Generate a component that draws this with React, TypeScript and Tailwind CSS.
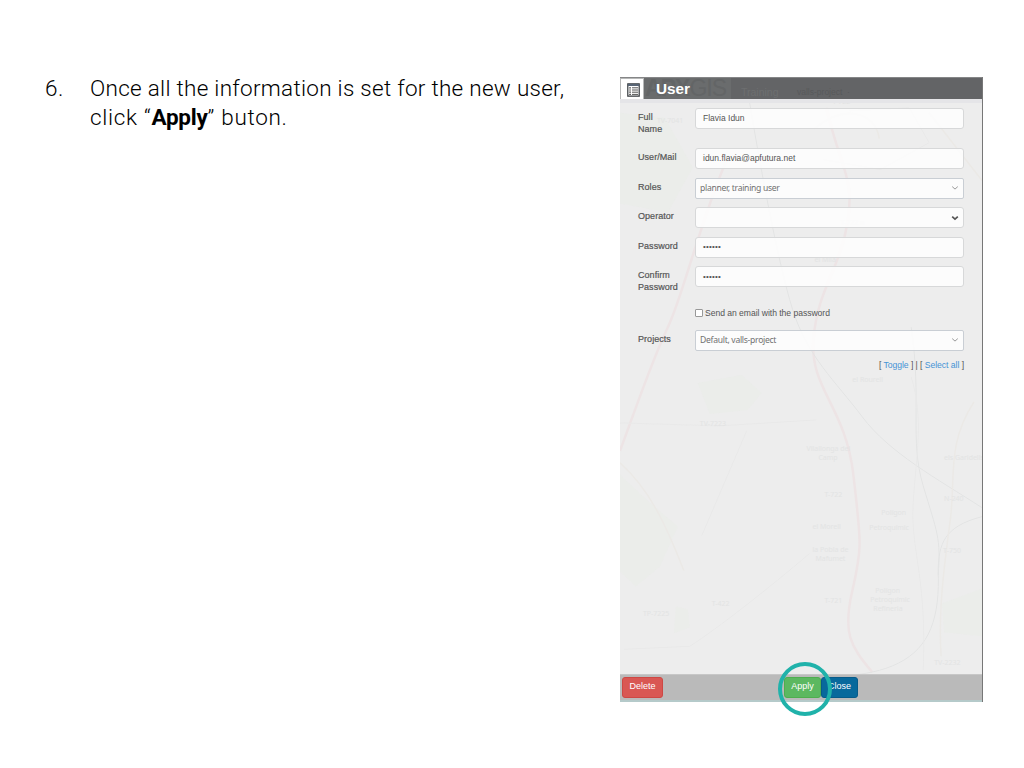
import React from 'react';

const liberation = "font-['Liberation_Sans',Arial,sans-serif]";

function Chevron({ bold }: { bold?: boolean }) {
  return (
    <svg className="ml-auto h-[6px] w-[8px] shrink-0" viewBox="0 0 8 6" fill="none">
      <path
        d="M1.2 1.6 4 4.1 6.8 1.6"
        stroke={bold ? '#555' : '#999'}
        strokeWidth={bold ? 1.7 : 1}
      />
    </svg>
  );
}

function Row({ label, height, children }: { label: React.ReactNode; height: string; children: React.ReactNode }) {
  return (
    <div className={`flex items-start ${height}`}>
      <div className="w-[57px] shrink-0 pt-[3px] text-[9px] leading-[12px] tracking-[0.05px] text-[#555] [-webkit-text-stroke:0.2px_#555]">
        {label}
      </div>
      {children}
    </div>
  );
}

const field = 'flex h-[21px] w-[269px] items-center rounded-[3px] border border-[#d7d8d9] bg-[#fdfdfd]/90 pr-[4px]';
const input = `${field} pl-[7px] text-[8.5px] text-[#555]`;
const select = "flex h-[21px] w-[269px] items-center rounded-[2px] border border-[#c9ced4] bg-[#fdfdfd]/90 pr-[4px] pl-[4px] font-['Noto_Sans','Open_Sans',sans-serif] text-[8.6px] tracking-[-0.3px] text-[#707070]";

function MapBackdrop() {
  const labels: [number, number, string][] = [
    [232, 13, 'el Rourell'], [233, 305, 'el Rourell'], [80, 349, 'TV-7223'],
    [187, 374, 'Vilallonga del'], [199, 383, 'Camp'], [205, 420, 'T-722'],
    [193, 452, 'el Morell'], [193, 475, 'la Pobla de'], [196, 484, 'Mafumet'],
    [205, 527, 'T-721'], [92, 530, 'T-422'], [23, 540, 'TP-7225'],
    [262, 438, 'Polígon'], [250, 453, 'Petroquímic'], [256, 517, 'Polígon'],
    [251, 526, 'Petroquímic'], [254, 535, 'Refineria'], [325, 424, 'N-240'],
    [324, 476, 'T-750'], [325, 383, 'els Garidells'], [315, 589, 'TV-2232'],
    [213, 26, 'T-722'], [221, 148, 'T-722 n'], [195, 185, 'el Milà'], [37, 45, 'TV-7041'],
  ];
  return (
    <svg className="absolute inset-0 h-full w-full" viewBox="0 0 363 625" fill="none">
      <g fill="#e9ece8" opacity=".6">
        <path d="M78 306l44-8 20 18-14 17-38 4zM0 398l30 28 28 24-18 40-24 20-16-15zM323 527l40-15v48l-38-4zM56 530l12 3 2 18-16 6zM0 35l45 5 28 50-25 45-48-9z" />
      </g>
      <g stroke="#ede4e5" strokeWidth="2.5">
        <path d="M207 30c14 62 29 69 21 116s-30 66-34 116 32 67 40 136 9 73-1 116-2 56 20 82" />
        <path d="M0 374C20 320 33 281 48 250s32-105 59-168" />
      </g>
      <g stroke="#e3e4e4" strokeWidth="1">
        <path d="M130 25c10 60 28 159 43 207s43 72 70 108 75 62 120 91M363 440c-39 10-43 28-44 53 2 48-8 78-40 94s-74 12-104 17" />
        <path d="M292 250c11 75-2 112 12 159s18 52 15 90" />
      </g>
      <g stroke="#e9e9e9" strokeWidth="1">
        <path d="M0 346l99 3 98-6M82 459l45-105M190 477c-41 35-92 75-120 93L4 573" />
        <path d="M292 300c13 42 5 78 2 126s14 73 10 168M230 33l60-3 20 35-49 27-57-10" />
      </g>
      <g stroke="#ebe9e6" strokeWidth="1.5">
        <path d="M0 386c30 27 46 62 64 108M355 325c-28 43-18 76-24 120s-12 91-9 135M195 51c30-25 61-17 65 10M310 35l53 68" />
      </g>
      <g fill="#e1e2e2" fontFamily="Noto Sans, sans-serif" fontSize="7" opacity=".8">
        {labels.map(([x, y, t], i) => <text key={i} x={x} y={y}>{t}</text>)}
      </g>
    </svg>
  );
}

function UserPanel() {
  return (
    <section className={`relative flex h-[625px] w-[363px] flex-col overflow-hidden border-r border-r-[#777] bg-[#ededed] ${liberation}`}>
      <MapBackdrop />
      <header className="relative flex h-[22px] shrink-0 border-t border-[#858687] bg-[#636466]">
        <div className="absolute top-0 left-0 flex h-full w-[111px] items-center justify-end overflow-hidden bg-[#6a6c6d] pr-[5px] text-[23px] font-bold tracking-[-1px] text-[#636566]">
          APX<span className="font-normal">GIS</span>
        </div>
        <span className="absolute top-[7px] left-[121px] text-[10.5px] leading-[15px] text-[#6d6f70]">Training</span>
        <span className="absolute top-[7px] left-[177px] text-[8.5px] leading-[15px] text-[#57595b]">valls-project&nbsp; ·</span>
        <div className="relative flex h-[23px] w-[24px] shrink-0 items-center justify-center border border-[#b7b8b8] bg-white pl-[2px]">
          <svg className="h-[14px] w-[13px]" viewBox="0 0 13 14">
            <path fill="#fff" stroke="#34383c" strokeWidth="1.2" d="M.8.8h11.4v12.4H.8z" />
            <path fill="#586575" d="M1 1h11v2H1z" />
            <path fill="#333" d="M2.3 4.2h1.5v1.2H2.3zM2.3 6.4h1.5v1.2H2.3zM2.3 8.6h1.5v1.2H2.3zM2.3 10.8h1.5v1.2H2.3z" />
            <path stroke="#555" d="M5 4.8h6M5 7h6M5 9.2h6M5 11.4h6" />
          </svg>
        </div>
        <h1 className="relative ml-[12px] text-[15.3px] leading-[21px] font-bold text-white">User</h1>
      </header>
      <div className="relative h-[4px] shrink-0 bg-[#e5e5e8]" />
      <form className="relative flex flex-1 flex-col pt-[4.5px] pl-[18px]" onSubmit={(e) => e.preventDefault()}>
        <Row height="h-[40px]" label={<>Full<br />Name</>}><div className={input}>Flavia Idun</div></Row>
        <Row height="h-[30px]" label="User/Mail"><div className={input}>idun.flavia@apfutura.net</div></Row>
        <Row height="h-[29.5px]" label="Roles"><div className={select}>planner, training user<Chevron /></div></Row>
        <Row height="h-[29.5px]" label="Operator"><div className={input}><Chevron bold /></div></Row>
        <Row height="h-[29.5px]" label="Password"><div className={`${input} text-[8px] tracking-[0.2px]`}>••••••</div></Row>
        <Row height="h-[37px]" label={<>Confirm<br />Password</>}><div className={`${input} text-[8px] tracking-[0.2px]`}>••••••</div></Row>
        <label className="ml-[57px] flex h-[26.5px] items-start pt-[4px] text-[8.6px] leading-[12px] tracking-[-0.04px] text-[#555]">
          <span className="mt-[2px] mr-[2px] h-[8px] w-[8px] rounded-[1px] border border-[#999] bg-white" />
          Send an email with the password
        </label>
        <Row height="h-[29px]" label="Projects"><div className={select}>Default, valls-project<Chevron /></div></Row>
        <div className="mr-[18px] text-right text-[8.6px] leading-[12px] tracking-[-0.04px] text-[#555]">
          [ <a className="text-[#4593d5]">Toggle</a> ] | [ <a className="text-[#4593d5]">Select all</a> ]
        </div>
      </form>
      <footer className="relative flex h-[28px] shrink-0 items-start border-t border-b-2 border-t-[#c7c7c7] border-b-[#b5caca] bg-[#bababa] pt-[2px] pl-[2px] text-[9px] leading-[17px] text-white">
        <button className="flex h-[21px] w-[41px] justify-center rounded-[3px] border border-[#ce4844] bg-[#d95753]">Delete</button>
        <button className="ml-[121px] flex h-[21px] w-[37px] justify-center rounded-[3px] border border-[#4fae4f] bg-[#5cb860]">Apply</button>
        <button className="flex h-[21px] w-[37px] justify-center rounded-[3px] border border-[#075b8a] bg-[#08699c]">Close</button>
      </footer>
    </section>
  );
}

export default function App() {
  return (
    <main className="relative flex h-[768px] w-[1024px] items-start overflow-hidden bg-white pt-[77px] pl-[45px]">
      <div className="flex w-[575px] shrink-0 -translate-y-[3px] font-['Roboto',sans-serif] text-[22.5px] leading-[29px] font-light text-black">
        <span className="w-[45px] shrink-0 tracking-[0.6px]">6.</span>
        <p className="whitespace-nowrap tracking-[0.28px]">
          Once all the information is set for the new user,<br />
          <span className="tracking-[0.7px]">click “<b className="font-bold tracking-[-0.25px]">Apply</b>” buton.</span>
        </p>
      </div>
      <UserPanel />
      <div className="absolute top-[662px] left-[778px] h-[54px] w-[54px] rounded-full border-4 border-[#20b2aa]" />
    </main>
  );
}
